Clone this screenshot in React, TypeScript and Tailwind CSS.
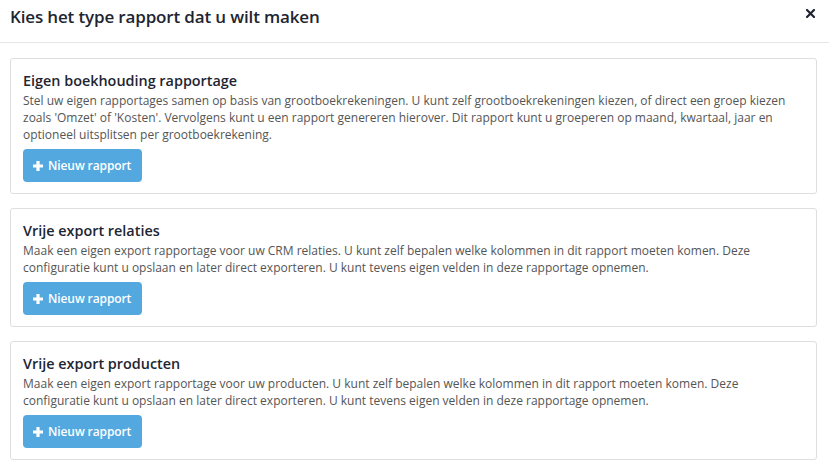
import React from "react";

const reports = [
  {
    title: "Eigen boekhouding rapportage",
    text: "Stel uw eigen rapportages samen op basis van grootboekrekeningen. U kunt zelf grootboekrekeningen kiezen, of direct een groep kiezen zoals 'Omzet' of 'Kosten'. Vervolgens kunt u een rapport genereren hierover. Dit rapport kunt u groeperen op maand, kwartaal, jaar en optioneel uitsplitsen per grootboekrekening.",
  },
  {
    title: "Vrije export relaties",
    text: "Maak een eigen export rapportage voor uw CRM relaties. U kunt zelf bepalen welke kolommen in dit rapport moeten komen. Deze configuratie kunt u opslaan en later direct exporteren. U kunt tevens eigen velden in deze rapportage opnemen.",
  },
  {
    title: "Vrije export producten",
    text: "Maak een eigen export rapportage voor uw producten. U kunt zelf bepalen welke kolommen in dit rapport moeten komen. Deze configuratie kunt u opslaan en later direct exporteren. U kunt tevens eigen velden in deze rapportage opnemen.",
  },
];

const PlusIcon = () => (
  <svg width="10" height="10" viewBox="0 0 10 10" className="shrink-0">
    <path d="M3.4 0h3.2v3.4H10v3.2H6.6V10H3.4V6.6H0V3.4h3.4z" fill="currentColor" />
  </svg>
);

export default function App() {
  return (
    <div className="w-[829px] h-[471px] bg-white font-['Open_Sans',sans-serif] overflow-hidden">
      <div className="h-[43px] flex items-center justify-between pl-[10px] pr-[14px] border-b border-[#e5e5e5]">
        <h2 className="text-[17px] font-semibold text-[#1e2532] tracking-[-0.15px] -mt-[9px]">
          Kies het type rapport dat u wilt maken
        </h2>
        <button className="text-[#1e2532] -mt-[16px]">
          <svg width="9" height="9" viewBox="0 0 9 9">
            <path d="M1 1l7 7M8 1L1 8" stroke="currentColor" strokeWidth="2.2" strokeLinecap="square" />
          </svg>
        </button>
      </div>
      <div className="pt-[15px] pl-[10px] pr-[12px] flex flex-col gap-[14px]">
        {reports.map((r) => (
          <div key={r.title} className="border border-[#dedede] rounded-[3px] px-[12px] pt-[12px] pb-[11px]">
            <h3 className="text-[14.4px] leading-[20px] font-semibold text-[#1e2532]">{r.title}</h3>
            <p className="text-[12px] leading-[17px] text-[#555] mt-[1px]">{r.text}</p>
            <button className="mt-[6px] h-[33px] pl-[10px] pr-[11px] flex items-center gap-[5px] bg-[#53a8e0] rounded-[4px] text-white text-[12px] font-semibold tracking-[-0.1px]">
              <PlusIcon />
              Nieuw rapport
            </button>
          </div>
        ))}
      </div>
    </div>
  );
}
